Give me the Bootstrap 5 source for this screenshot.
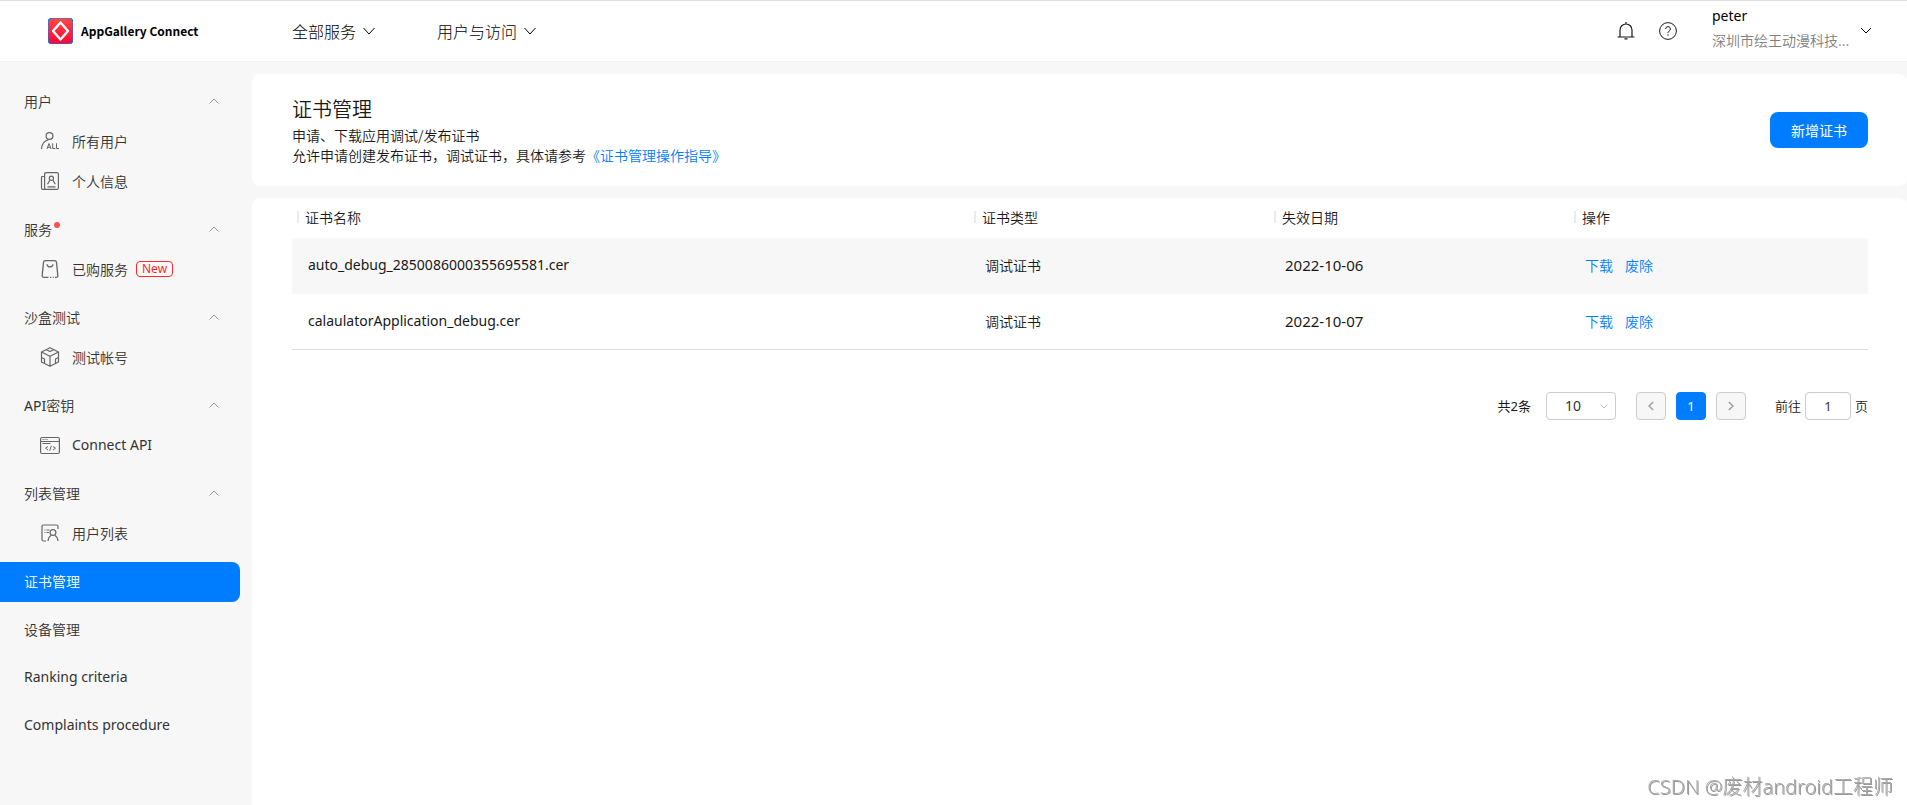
<!DOCTYPE html>
<html lang="zh-CN">
<head>
<meta charset="utf-8">
<meta name="viewport" content="width=device-width, initial-scale=1">
<title>证书管理 - AppGallery Connect</title>
<link rel="stylesheet" href="https://cdn.jsdelivr.net/npm/bootstrap@5.3.0/dist/css/bootstrap.min.css">
<style>
:root { --agc-blue: #007dff; --agc-bg: #f7f7f7; --agc-text: #191919; }
body { font-family: "Noto Sans", "Noto Sans CJK SC", sans-serif; font-size: 14px; line-height: 20px; color: var(--agc-text); background: var(--agc-bg); }
svg { fill: none; stroke: currentColor; flex: none; display: block; }
a { color: var(--agc-blue); text-decoration: none; }
.cjk { font-family: "Noto Sans CJK SC", sans-serif; font-weight: 350; }
.date { font-size: 15px; }
.topbar { height: 62px; background: #fff; border-top: 1px solid #dcdce2; border-bottom: 1px solid #f0f0f0; padding: 0 35px 0 48px; }
.brand-box { width: 244px; }
.brand-name { font-family: "Noto Sans CJK SC", sans-serif; font-weight: 700; font-size: 12px; line-height: 20px; color: #000; }
.menu-btn { font-size: 16px; line-height: 24px; font-weight: 300; color: #000; border: 0; background: none; padding: 0 0 1px; gap: 7px; }
.menu-btn + .menu-btn { margin-left: 62px; }
.icon-btn { border: 0; background: none; padding: 0; color: #191919; }
.account { border: 0; background: none; padding: 0; margin-left: 35px; text-align: left; line-height: 25px; }
.account-text { width: 140px; padding-bottom: 6px; }
.company { color: #808080; }
.sidebar { width: 240px; padding-top: 20px; flex: none; }
.side-link { height: 40px; padding: 0 24px 2px; color: #333; width: 100%; border: 0; background: none; text-align: left; }
.side-sub { padding-left: 40px; gap: 12px; }
.side-sub svg { color: #666; }
.side-link.active { background: var(--agc-blue); color: #fff; border-radius: 0 8px 8px 0; }
.side-toggle > svg { color: #999; margin-right: -3px; }
.dot { width: 6px; height: 6px; border-radius: 50%; background: #ff5050; margin: 0 0 8px 2px; }
.new-tag { border: 1px solid #fa2a2d; border-radius: 4px; color: #fa2a2d; font-size: 12px; line-height: 14px; padding: 0 5px; margin-left: -4px; }
.content { padding-top: 12px; gap: 12px; margin-left: 12px; }
.panel { background: #fff; border-radius: 8px; padding: 0 39px 0 40px; }
.panel-fill { border-radius: 8px 8px 0 0; }
.intro { height: 112px; }
.intro h1 { font-size: 20px; line-height: 28px; margin: 0 0 2px; }
.btn-add { background: var(--agc-blue); color: #fff; font-size: 14px; line-height: 20px; border: 0; border-radius: 8px; padding: 8px 21px; }
.btn-add:hover { background: #0069d9; color: #fff; }
.certs { width: 100%; table-layout: fixed; }
.certs th { height: 40px; padding: 0 5px 2px; font-weight: 350; }
.certs th span { border-left: 2px solid #ebebeb; padding-left: 6px; display: block; line-height: 12px; }
.certs td { height: 56px; padding: 0 16px 2px; }
.certs tbody tr:first-child { background: var(--agc-bg); }
.certs tbody tr:last-child td { box-shadow: inset 0 -1px #dedede; }
.col-kind { width: 300px; }
.col-ops { width: 299px; }
.pager { margin-top: 42px; font-size: 13px; }
.box { height: 28px; border: 1px solid #ccc; border-radius: 4px; background: #fff; padding: 0; font-size: 13px; line-height: 18px; color: #333; }
.size-box { width: 70px; margin: 0 20px 0 15px; }
.size-box select { appearance: none; border: 0; background: none; width: 100%; height: 100%; padding-left: 18px; font-size: 14px; color: #333; }
.size-box svg { position: absolute; right: 7px; top: 9px; color: #bbb; pointer-events: none; }
.pages { gap: 10px; margin-right: 29px; }
.page-btn { width: 30px; background: var(--agc-bg); color: #999; display: flex; align-items: center; justify-content: center; }
.page-btn.current { background: var(--agc-blue); border-color: var(--agc-blue); color: #fff; }
.jump { width: 46px; text-align: center; margin: 0 4px; }
.credit { position: fixed; right: 14px; bottom: 4px; font-weight: 300; font-size: 20px; line-height: 28px; color: #aaa; text-shadow: 1px 1px 0 #999; }
</style>
</head>
<body class="d-flex flex-column min-vh-100">
<header class="topbar d-flex align-items-center">
  <a class="brand-box d-flex align-items-center" href="#">
    <svg width="25" height="26" viewBox="0 0 25 26" stroke="none">
      <defs><linearGradient id="lg" x1="0" y1="0" x2="0" y2="1"><stop offset="0" stop-color="#ff4a43"/><stop offset="1" stop-color="#fb0434"/></linearGradient></defs>
      <rect width="25" height="26" rx="4" fill="url(#lg)"/>
      <path d="M12.500 4.500 20 13l-7.500 8.500L5 13z" stroke="#fff" stroke-width="2.400" stroke-linejoin="round"/>
    </svg>
    <span class="brand-name ms-2">AppGallery Connect</span>
  </a>
  <nav class="d-flex cjk">
    <button class="menu-btn d-flex align-items-center" type="button">全部服务<svg width="12" height="8" viewBox="0 0 12 8"><path d="M.5 1 6 7l5.500-6"/></svg></button>
    <button class="menu-btn d-flex align-items-center" type="button">用户与访问<svg width="12" height="8" viewBox="0 0 12 8"><path d="M.5 1 6 7l5.500-6"/></svg></button>
  </nav>
  <div class="ms-auto d-flex align-items-center">
    <button class="icon-btn" type="button" aria-label="通知"><svg width="18" height="18" viewBox="0 0 18 18"><path d="M3 14.500V8a6 6 0 0 1 12 0v6.500M.5 15h17M9 0v2M7.500 16.900h3" stroke-width="1.200"/></svg></button>
    <button class="icon-btn ms-4" type="button" aria-label="帮助"><svg width="18" height="18" viewBox="0 0 18 18"><circle cx="9" cy="9" r="8.400"/><path d="M6.600 7a2.400 2.400 0 1 1 3.600 2.100C9.300 9.700 9 10 9 11M9 12.200v1.500"/></svg></button>
    <button class="account d-flex align-items-center" type="button">
      <span class="account-text"><span class="d-block">peter</span><span class="d-block company cjk">深圳市绘王动漫科技...</span></span>
      <svg class="ms-2" width="12" height="8" viewBox="0 0 12 8" stroke="#666"><path d="M1 1l5 5 5-5"/></svg>
    </button>
  </div>
</header>

<div class="d-flex flex-grow-1">
  <aside class="sidebar">
    <nav class="d-grid gap-2">
      <div>
        <button class="side-link side-toggle d-flex align-items-center justify-content-between cjk" type="button">用户<svg width="10" height="6" viewBox="0 0 10 6"><path d="M.5 5.500 5 1l4.500 4.500"/></svg></button>
        <a class="side-link side-sub d-flex align-items-center" href="#">
          <svg width="20" height="20" viewBox="0 0 20 20"><circle cx="9.500" cy="5" r="3.400" stroke-width="1.200"/><path d="M1.500 18c.2-5 2.500-8 7-9.300" stroke-width="1.200"/><path d="M7 18l2-5.500 2 5.500M7.700 16.300h2.700M12.700 12.300v5.200h2.600M16.500 12.300v5.200H19"/></svg>
          <span class="cjk">所有用户</span></a>
        <a class="side-link side-sub d-flex align-items-center" href="#">
          <svg width="20" height="20" viewBox="0 0 20 20"><rect x="4.600" y="1.600" width="13.800" height="16.800" rx="1.500" stroke-width="1.200"/><path d="M4.500 5.500h-2q-1 0-1 1V17q0 1.400 1.400 1.400H6M7.500 15.800h8M7.500 13.200l2.200-3.800M15.300 13.200l-2.200-3.800" stroke-width="1.200"/><circle cx="11.400" cy="7.200" r="2.100" stroke-width="1.200"/></svg>
          <span class="cjk">个人信息</span></a>
      </div>
      <div>
        <button class="side-link side-toggle d-flex align-items-center justify-content-between cjk" type="button"><span class="d-flex align-items-center">服务<i class="dot"></i></span><svg width="10" height="6" viewBox="0 0 10 6"><path d="M.5 5.500 5 1l4.500 4.500"/></svg></button>
        <a class="side-link side-sub d-flex align-items-center" href="#">
          <svg width="20" height="20" viewBox="0 0 20 20"><path d="M8.500 18.400H4q-2 0-1.800-2L3.500 3.400Q3.700 1.600 5.500 1.600h9q1.800 0 2 1.800l1.300 13q.2 2-1.800 2h-1M10 18.400h1.200M12.700 18.400h1M7 5.300c.6 3.400 5.400 3.400 6 0" stroke-width="1.300"/></svg>
          <span class="cjk">已购服务</span><span class="new-tag">New</span></a>
      </div>
      <div>
        <button class="side-link side-toggle d-flex align-items-center justify-content-between cjk" type="button">沙盒测试<svg width="10" height="6" viewBox="0 0 10 6"><path d="M.5 5.500 5 1l4.500 4.500"/></svg></button>
        <a class="side-link side-sub d-flex align-items-center" href="#">
          <svg width="20" height="20" viewBox="0 0 20 20"><path d="M10 .8 18.500 5v10L10 19.300 1.500 15V5zM1.500 5l8.500 4.300L18.500 5M10 9.300v10M6.500 2.700 10 4.500l3.500-1.800M1.500 10.500l3 1.500v4.300M18.500 10.500l-3 1.500v4.300" stroke-width="1.200" stroke-linejoin="round"/></svg>
          <span class="cjk">测试帐号</span></a>
      </div>
      <div>
        <button class="side-link side-toggle d-flex align-items-center justify-content-between" type="button"><span>API<span class="cjk">密钥</span></span><svg width="10" height="6" viewBox="0 0 10 6"><path d="M.5 5.500 5 1l4.500 4.500"/></svg></button>
        <a class="side-link side-sub d-flex align-items-center" href="#">
          <svg width="20" height="20" viewBox="0 0 20 20"><rect x=".6" y="2.500" width="18.800" height="16" rx="1.500" stroke-width="1.200"/><path d="M.6 6.500h18.800M2.500 4.500h1M4.500 4.500h1M6.500 4.500h1M2.500 8.500h8M8 11.500l-2.500 1.700L8 15M13 11.500l2.500 1.700L13 15M11.300 10.800l-1.600 5"/></svg>
          <span>Connect API</span></a>
      </div>
      <div>
        <button class="side-link side-toggle d-flex align-items-center justify-content-between cjk" type="button">列表管理<svg width="10" height="6" viewBox="0 0 10 6"><path d="M.5 5.500 5 1l4.500 4.500"/></svg></button>
        <a class="side-link side-sub d-flex align-items-center" href="#">
          <svg width="20" height="20" viewBox="0 0 20 20"><path d="M6 18H3.500Q2 18 2 16.500v-13Q2 2 3.500 2h13Q18 2 18 3.500V6M4.500 7h1M6.500 7h3M4.500 9.500h1M6.500 9.500h2.500M8 18c.3-2.700 1.300-4.600 3-5.500M18 18c-.3-2.700-1.300-4.600-3-5.500" stroke-width="1.200"/><circle cx="13" cy="9.500" r="2.900" stroke-width="1.200"/></svg>
          <span class="cjk">用户列表</span></a>
      </div>
      <a class="side-link d-flex align-items-center cjk active" href="#" aria-current="page">证书管理</a>
      <a class="side-link d-flex align-items-center cjk" href="#">设备管理</a>
      <a class="side-link d-flex align-items-center" href="#">Ranking criteria</a>
      <a class="side-link d-flex align-items-center" href="#">Complaints procedure</a>
    </nav>
  </aside>

  <main class="content flex-grow-1 d-flex flex-column">
    <section class="panel intro d-flex align-items-center justify-content-between cjk">
      <div>
        <h1 class="cjk">证书管理</h1>
        <div>申请、下载应用调试/发布证书</div>
        <div>允许申请创建发布证书，调试证书，具体请参考<a href="#">《证书管理操作指导》</a></div>
      </div>
      <button class="btn btn-add" type="button">新增证书</button>
    </section>

    <section class="panel panel-fill flex-grow-1">
      <table class="certs">
        <colgroup><col><col class="col-kind"><col class="col-kind"><col class="col-ops"></colgroup>
        <thead class="cjk">
          <tr><th scope="col"><span>证书名称</span></th><th scope="col"><span>证书类型</span></th><th scope="col"><span>失效日期</span></th><th scope="col"><span>操作</span></th></tr>
        </thead>
        <tbody>
          <tr><td>auto_debug_2850086000355695581.cer</td><td class="cjk">调试证书</td><td class="date">2022-10-06</td><td class="cjk"><a href="#">下载</a><a class="ms-2 ps-1" href="#">废除</a></td></tr>
          <tr><td>calaulatorApplication_debug.cer</td><td class="cjk">调试证书</td><td class="date">2022-10-07</td><td class="cjk"><a href="#">下载</a><a class="ms-2 ps-1" href="#">废除</a></td></tr>
        </tbody>
      </table>
      <div class="pager d-flex align-items-center justify-content-end">
        <span>共2条</span>
        <div class="box size-box position-relative"><select aria-label="每页条数"><option>10</option></select><svg width="8" height="8" viewBox="0 0 8 8"><path d="M.5 2.500 4 6l3.500-3.500"/></svg></div>
        <div class="pages d-flex">
          <button class="box page-btn" type="button" aria-label="上一页"><svg width="6" height="10" viewBox="0 0 6 10" stroke-width="1.300"><path d="M5.200 1 1 5l4.200 4"/></svg></button>
          <button class="box page-btn current" type="button">1</button>
          <button class="box page-btn" type="button" aria-label="下一页"><svg width="6" height="10" viewBox="0 0 6 10" stroke-width="1.300"><path d="M.8 1 5 5 .8 9"/></svg></button>
        </div>
        <label class="cjk" for="jump">前往</label>
        <input class="box jump" id="jump" type="text" value="1">
        <span class="cjk">页</span>
      </div>
    </section>
  </main>
</div>
<div class="credit">CSDN @废材android工程师</div>
<script src="https://cdn.jsdelivr.net/npm/bootstrap@5.3.0/dist/js/bootstrap.bundle.min.js"></script>
</body>
</html>
